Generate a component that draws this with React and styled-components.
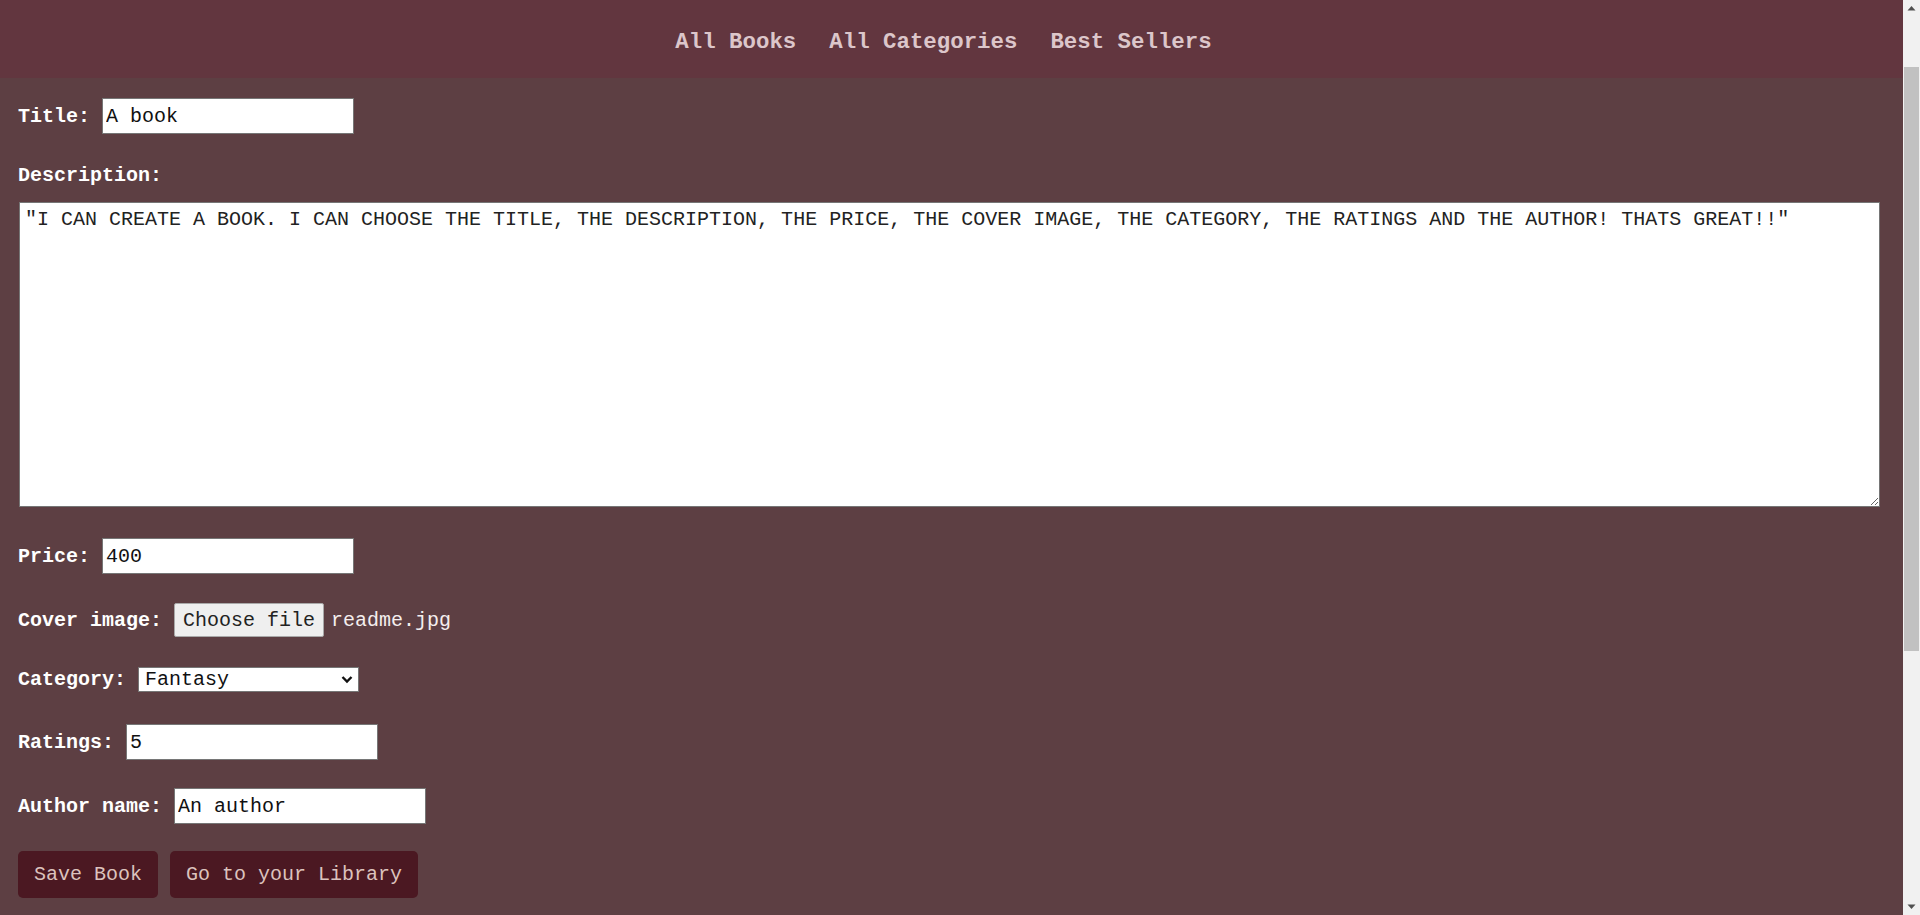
import React, { useState } from 'react';
import styled, { createGlobalStyle } from 'styled-components';

const GlobalStyle = createGlobalStyle`
  body {
    margin: 0;
    background: #5d3f43;
    font-family: "Liberation Mono", "Courier New", monospace;
  }
`;

const categories = ['Fantasy', 'Romance', 'Science Fiction', 'Mystery', 'Biography'];

const App = () => {
  const [book, setBook] = useState({
    title: 'A book',
    description:
      '"I CAN CREATE A BOOK. I CAN CHOOSE THE TITLE, THE DESCRIPTION, THE PRICE, THE COVER IMAGE, THE CATEGORY, THE RATINGS AND THE AUTHOR! THATS GREAT!!"',
    price: '400',
    category: 'Fantasy',
    ratings: '5',
    author: 'An author',
  });

  const update = (key) => (e) => setBook({ ...book, [key]: e.target.value });

  return (
    <Page>
      <GlobalStyle />
      <Header>
        <NavList>
          <NavLink href="#">All Books</NavLink>
          <NavLink href="#">All Categories</NavLink>
          <NavLink href="#">Best Sellers</NavLink>
        </NavList>
      </Header>

      <Form onSubmit={(e) => e.preventDefault()}>
        <Row $mt={0}>
          <Label htmlFor="title">Title:</Label>
          <TextInput id="title" value={book.title} onChange={update('title')} />
        </Row>

        <Row $mt={30}>
          <Label htmlFor="description">Description:</Label>
        </Row>
        <TextArea
          id="description"
          value={book.description}
          onChange={update('description')}
        />

        <Row $mt={31}>
          <Label htmlFor="price">Price:</Label>
          <TextInput id="price" value={book.price} onChange={update('price')} />
        </Row>

        <Row $mt={29}>
          <Label>Cover image:</Label>
          <FileButton type="button">Choose file</FileButton>
          <FileName>readme.jpg</FileName>
        </Row>

        <Row $mt={30}>
          <Label htmlFor="category">Category:</Label>
          <SelectWrap>
            <Select id="category" value={book.category} onChange={update('category')}>
              {categories.map((c) => (
                <option key={c} value={c}>
                  {c}
                </option>
              ))}
            </Select>
            <Chevron viewBox="0 0 12 8" aria-hidden="true">
              <path d="M1.5 1.5 L6 6 L10.5 1.5" />
            </Chevron>
          </SelectWrap>
        </Row>

        <Row $mt={32}>
          <Label htmlFor="ratings">Ratings:</Label>
          <TextInput id="ratings" value={book.ratings} onChange={update('ratings')} />
        </Row>

        <Row $mt={28}>
          <Label htmlFor="author">Author name:</Label>
          <TextInput id="author" value={book.author} onChange={update('author')} />
        </Row>

        <Actions>
          <Button type="submit">Save Book</Button>
          <Button type="button">Go to your Library</Button>
        </Actions>
      </Form>

      <ScrollTrack aria-hidden="true">
        <ScrollArrow viewBox="0 0 17 17">
          <path d="M4.5 10.5 L8.5 6 L12.5 10.5 Z" />
        </ScrollArrow>
        <ScrollThumb />
        <ScrollArrow viewBox="0 0 17 17" $bottom>
          <path d="M4.5 6.5 L8.5 11 L12.5 6.5 Z" />
        </ScrollArrow>
      </ScrollTrack>
    </Page>
  );
};

export default App;

const Page = styled.div`
  min-height: 100vh;
  margin-right: 17px;
  background: #5d3f43;
`;

const Header = styled.header`
  position: sticky;
  top: 0;
  height: 78px;
  background: #62363f;
  display: flex;
  align-items: center;
  justify-content: center;
  padding-top: 6px;
  box-sizing: border-box;
`;

const NavList = styled.nav`
  display: flex;
  gap: 17px;
`;

const NavLink = styled.a`
  margin-right: 16px;
  color: #dcc6ca;
  font-size: 22.4px;
  font-weight: bold;
  text-decoration: none;
`;

const Form = styled.form`
  display: flex;
  flex-direction: column;
  align-items: flex-start;
  padding: 20px 18px 0;
`;

const Row = styled.div`
  display: flex;
  align-items: center;
  margin-top: ${(p) => p.$mt}px;
`;

const Label = styled.label`
  margin-right: 12px;
  color: #ffffff;
  font-size: 20px;
  font-weight: bold;
  line-height: 23px;
`;

const TextInput = styled.input`
  width: 252px;
  height: 36px;
  box-sizing: border-box;
  padding: 0 3px;
  border: 1px solid #767676;
  background: #ffffff;
  color: #111111;
  font-family: inherit;
  font-size: 20px;
`;

const TextArea = styled.textarea`
  margin: 15px 0 0 1px;
  width: calc(100% - 6px);
  height: 305px;
  box-sizing: border-box;
  padding: 5px 5px 4px;
  border: 1px solid #767676;
  background: #ffffff;
  color: #222222;
  font-family: inherit;
  font-size: 20px;
  line-height: 23px;
  resize: both;
`;

const FileButton = styled.button`
  height: 34px;
  padding: 0 8px;
  border: 1px solid #a9a9a9;
  border-radius: 2px;
  background: #efefef;
  color: #222222;
  font-family: inherit;
  font-size: 20px;
`;

const FileName = styled.span`
  margin-left: 7px;
  color: #f4eeee;
  font-size: 20px;
`;

const SelectWrap = styled.span`
  position: relative;
  display: inline-flex;
`;

const Select = styled.select`
  appearance: none;
  width: 221px;
  height: 25px;
  padding: 0 24px 0 6px;
  border: 1px solid #767676;
  border-radius: 0;
  background: #ffffff;
  color: #111111;
  font-family: inherit;
  font-size: 20px;
`;

const Chevron = styled.svg`
  position: absolute;
  right: 6px;
  top: 8px;
  width: 12px;
  height: 9px;
  pointer-events: none;
  fill: none;
  stroke: #111111;
  stroke-width: 2.4;
`;

const Actions = styled.div`
  display: flex;
  gap: 12px;
  margin-top: 27px;
`;

const Button = styled.button`
  padding: 12px 16px;
  border: none;
  border-radius: 5px;
  background: #4b1822;
  color: #dcc2bd;
  font-family: inherit;
  font-size: 20px;
  line-height: 23px;
  cursor: pointer;
`;

const ScrollTrack = styled.div`
  position: fixed;
  top: 0;
  right: 0;
  width: 17px;
  height: 100vh;
  background: #f1f1f1;
`;

const ScrollArrow = styled.svg`
  position: absolute;
  left: 0;
  ${(p) => (p.$bottom ? 'bottom: 0;' : 'top: 0;')}
  width: 17px;
  height: 17px;
  fill: #505050;
`;

const ScrollThumb = styled.div`
  position: absolute;
  top: 67px;
  left: 1px;
  width: 15px;
  height: 584px;
  background: #c1c1c1;
`;
